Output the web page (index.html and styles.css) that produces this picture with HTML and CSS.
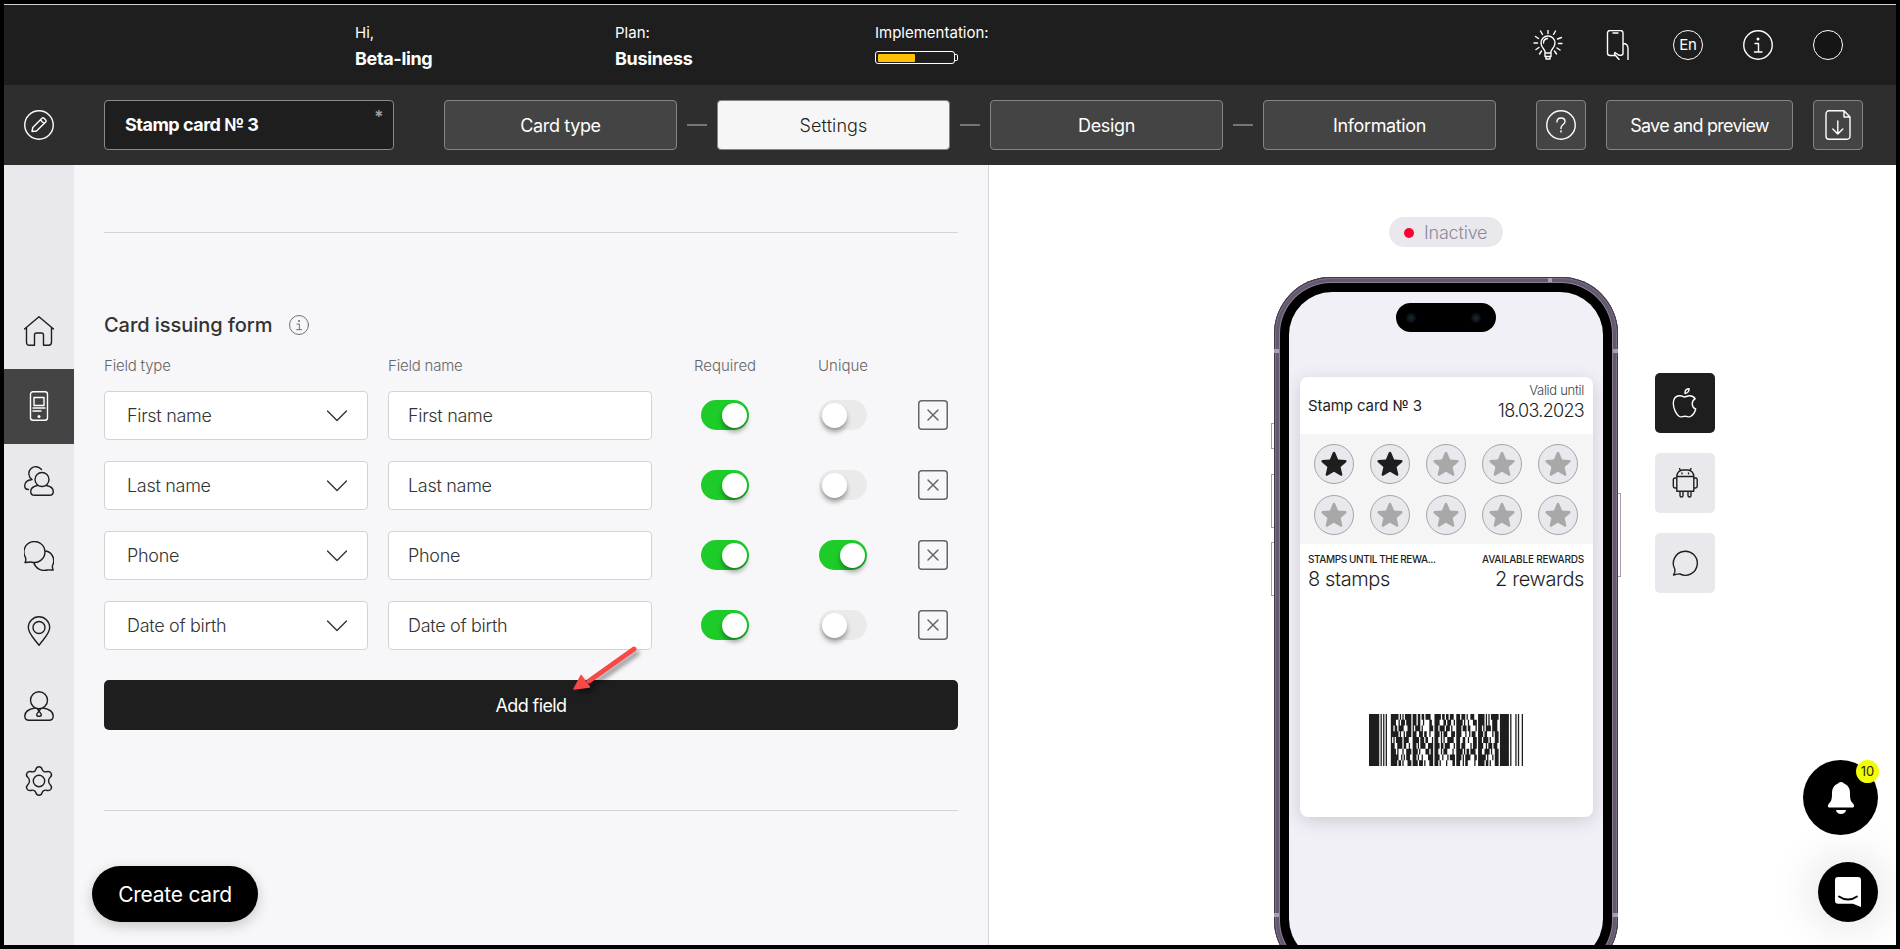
FILE: index.html
```
<!DOCTYPE html>
<html lang="en">
  <head>
    <meta charset="UTF-8" />
    <meta name="viewport" content="width=device-width, initial-scale=1.0" />
    <title>Stamp card - Settings</title>
    <link rel="stylesheet" href="styles.css">
  </head>
  <body>
    <!-- Shared icons -->
    <svg class="sprite" width="0" height="0">
      <symbol id="star" viewBox="0 0 26 26">
        <path d="M13 .8c.6 0 1 .4 1.300 1l2.800 6.700 7.200.6c1.300.1 1.700 1.300.8 2.200l-5.500 4.700 1.700 7.200c.2 1.300-.8 2-1.900 1.400L13 20.800l-6.400 3.800c-1.100.6-2.100-.1-1.900-1.400L6.400 16 .9 11.300C0 10.400.4 9.200 1.700 9.100l7.200-.6 2.800-6.700c.3-.6.7-1 1.300-1z" />
      </symbol>
      <symbol id="chevron" viewBox="0 0 20 12">
        <path d="M.5 1 10 10.500 19.500 1" />
      </symbol>
      <symbol id="cross" viewBox="0 0 30 30">
        <rect x=".75" y=".75" width="28.500" height="28.500" rx="3" />
        <path d="m10 10 10 10M20 10 10 20" />
      </symbol>
      <symbol id="info" viewBox="0 0 30 30">
        <circle cx="15" cy="15" r="14.250" />
        <path d="M12 13.500h3.500V22M11.500 22h7.500" />
        <circle class="dot" cx="15" cy="9" r="1.500" />
      </symbol>
    </svg>

    <div class="app">
      <!-- Top bar -->
      <header class="topbar">
        <div class="account">
          <div class="account-item">
            <div class="account-label">Hi,</div>
            <div class="account-value">Beta-ling</div>
          </div>
          <div class="account-item">
            <div class="account-label">Plan:</div>
            <div class="account-value">Business</div>
          </div>
          <div class="account-item">
            <div class="account-label">Implementation:</div>
            <div class="battery"><div class="battery-body"><div class="battery-level"></div></div><div class="battery-tip"></div></div>
          </div>
        </div>
        <div class="top-icons">
          <svg width="30" height="30" viewBox="0 0 30 30">
            <path d="M12 23v-1.500c0-2-4-4-4-8.500a6.800 6.800 0 0 1 14 0c0 4.500-4 6.500-4 8.500V23zM12 23v3.500h6V23M13 27v2h4v-2M10.500 13a4.500 4.500 0 0 1 4-4.500M15 3.500V0M9.500 4.500 7.500 1M5.500 8.500l-3-2M4.500 13H1M6 17.500l-3 2M8.500 21l-2 3M20.500 4.500l2-3.500M24.500 9l4-1.500M25.500 13.500H29M24 18l3 2M21.500 21l2 3" />
          </svg>
          <svg width="30" height="30" viewBox="0 0 30 30">
            <path d="M12 25.500H7A2.500 2.500 0 0 1 4.500 23V3A2.500 2.500 0 0 1 7 .5h10.500A2.500 2.500 0 0 1 20 3v21c-1 1.500-3 1.500-4.500 1l-3.500-2.500c-1 1 0 2.500 1 3.500l3 3.500M10 3h5M20 13.500c3 0 5 2 5 5V30" />
          </svg>
          <div class="lang">En</div>
          <svg width="30" height="30"><use href="#info" /></svg>
          <div class="avatar"></div>
        </div>
      </header>

      <!-- Card editor toolbar -->
      <nav class="toolbar">
        <div class="edit">
          <svg width="30" height="30" viewBox="0 0 30 30">
            <circle cx="15" cy="15" r="14.250" />
            <path d="m8 21.500.8-4L18 8.300c.6-.6 1.400-.6 2 0l1.700 1.700c.6.600.6 1.400 0 2L12.500 21zM16.500 10l3.500 3.500" />
          </svg>
        </div>
        <div class="card-name">Stamp card № 3<span class="asterisk">*</span></div>
        <div class="steps">
          <div class="step">Card type</div>
          <div class="dash"></div>
          <div class="step active">Settings</div>
          <div class="dash"></div>
          <div class="step">Design</div>
          <div class="dash"></div>
          <div class="step">Information</div>
        </div>
        <div class="actions">
          <div class="btn square">
            <svg width="30" height="30" viewBox="0 0 30 30">
              <circle cx="15" cy="15" r="14.250" />
              <path d="M11 12c0-2.500 1.500-4 4-4s4 1.500 4 3.500c0 3-4 3-4 6.500v.5M15 20.700v1.300" />
            </svg>
          </div>
          <div class="btn save">Save and preview</div>
          <div class="btn square">
            <svg width="26" height="30" viewBox="0 0 26 30">
              <path d="M19 .75H4A3 3 0 0 0 1 3.750v22.500a3 3 0 0 0 3 3h18a3 3 0 0 0 3-3V7zM19 .75V7h6M12.800 11v13M7.800 19l5 5 5-5" />
            </svg>
          </div>
        </div>
      </nav>

      <div class="main">
        <!-- Sidebar -->
        <aside class="sidebar">
          <div class="side-item">
            <svg width="30" height="30" viewBox="0 0 30 30">
              <path d="M.5 13 15 .8 29.500 13M2.500 11.500V26c0 2 1 3.300 3 3.300h5V19c0-1.500.8-2 2-2h5c1.200 0 2 .5 2 2v10.300h5c2 0 3-1.300 3-3.300V11.500" />
            </svg>
          </div>
          <div class="side-item active">
            <svg width="30" height="30" viewBox="0 0 30 30">
              <rect x="6.500" y=".75" width="17" height="28.500" rx="2.500" />
              <path d="M10 6.500h10v8H10zM9 17h12M9 20h8" />
              <circle class="dot" cx="15" cy="25.500" r="1.500" />
            </svg>
          </div>
          <div class="side-item">
            <svg width="30" height="30" viewBox="0 0 30 30">
              <circle cx="18" cy="13.500" r="7" />
              <path d="M13.500 19.500C9 20.300 6.700 22.500 6.700 25.500c0 2.500 1.500 3.800 4 3.800h14.600c2.500 0 4-1.300 4-3.800 0-3-2.500-5.200-7-6M17.500 3.500A7 7 0 1 0 8 13.500c-4 .5-7.300 2.500-7.300 6.500 0 2.200 1.300 3.500 3.800 3.500" />
            </svg>
          </div>
          <div class="side-item">
            <svg width="30" height="30" viewBox="0 0 30 30">
              <path d="M1 21.500c1-1.500 1-3 .5-5A10.500 10.500 0 1 1 8 21.200c-2-.5-4.500.3-7 .3zM22 10a10 10 0 0 1 6.500 14.500c-.3 1.500 0 3 .7 4.500-2 0-4-.3-6 0a11 11 0 0 1-13.500-7.500" />
            </svg>
          </div>
          <div class="side-item">
            <svg width="30" height="30" viewBox="0 0 30 30">
              <path d="M15 29.300C10 22.500 4.300 17.500 4.300 11.500a10.700 10.700 0 0 1 21.400 0c0 6-5.700 11-10.700 17.800z" />
              <circle cx="15" cy="11.500" r="6" />
            </svg>
          </div>
          <div class="side-item">
            <svg width="30" height="30" viewBox="0 0 30 30">
              <circle cx="15" cy="9.300" r="8.500" />
              <path d="M11 17C5 18 .8 20.500.8 25c0 2.800 1.500 4.300 4.200 4.300h20c2.700 0 4.200-1.500 4.200-4.300 0-4.500-4.200-7-10.200-8M13.500 18l1.500 2 1.500-2M15 20c-1.200 2-2.300 2.700-2.300 3.700 0 1 1 1.600 2.300 1.600s2.300-.6 2.300-1.600c0-1-1.100-1.700-2.300-3.700z" />
            </svg>
          </div>
          <div class="side-item">
            <svg width="30" height="30" viewBox="0 0 30 30">
              <path d="M11.800 3.500c.6-2 1.500-2.800 3.200-2.800s2.600.8 3.200 2.800c.5 1.700 2.300 2.700 4 2.200 2.300-.6 3.800-.4 4.800 1.300.9 1.500.9 2.700-.8 4.300-2.200 2-2.200 5.400 0 7.400 1.700 1.600 1.700 2.800.8 4.300-1 1.700-2.500 1.900-4.800 1.300-1.700-.5-3.500.5-4 2.200-.6 2-1.500 2.800-3.200 2.800s-2.600-.8-3.200-2.800c-.5-1.700-2.300-2.700-4-2.200-2.300.6-3.800.4-4.800-1.300-.9-1.500-.9-2.700.8-4.300 2.200-2 2.200-5.400 0-7.400-1.700-1.600-1.700-2.800-.8-4.300 1-1.700 2.500-1.900 4.800-1.300 1.700.5 3.500-.5 4-2.200z" />
              <circle cx="15" cy="15" r="5.700" />
            </svg>
          </div>
        </aside>

        <!-- Settings form -->
        <section class="content">
          <hr class="rule">
          <div class="form-title">Card issuing form <svg width="20" height="20"><use href="#info" /></svg></div>
          <div class="form-row form-head">
            <div>Field type</div>
            <div>Field name</div>
            <div class="center">Required</div>
            <div class="center">Unique</div>
          </div>
          <div class="form-row">
            <div class="field">First name <svg width="20" height="12"><use href="#chevron" /></svg></div>
            <div class="field name">First name</div>
            <div class="toggle on"></div>
            <div class="toggle"></div>
            <svg class="remove" width="30" height="30"><use href="#cross" /></svg>
          </div>
          <div class="form-row">
            <div class="field">Last name <svg width="20" height="12"><use href="#chevron" /></svg></div>
            <div class="field name">Last name</div>
            <div class="toggle on"></div>
            <div class="toggle"></div>
            <svg class="remove" width="30" height="30"><use href="#cross" /></svg>
          </div>
          <div class="form-row">
            <div class="field">Phone <svg width="20" height="12"><use href="#chevron" /></svg></div>
            <div class="field name">Phone</div>
            <div class="toggle on"></div>
            <div class="toggle on"></div>
            <svg class="remove" width="30" height="30"><use href="#cross" /></svg>
          </div>
          <div class="form-row">
            <div class="field">Date of birth <svg width="20" height="12"><use href="#chevron" /></svg></div>
            <div class="field name">Date of birth</div>
            <div class="toggle on"></div>
            <div class="toggle"></div>
            <svg class="remove" width="30" height="30"><use href="#cross" /></svg>
          </div>
          <div class="add-field">Add field</div>
          <hr class="rule">
        </section>

        <!-- Card preview -->
        <section class="preview">
          <div class="status"><span class="status-dot"></span>Inactive</div>
          <div class="phone">
            <i class="key key-1"></i><i class="key key-2"></i><i class="key key-3"></i><i class="key key-4"></i>
            <i class="band band-1"></i><i class="band band-2"></i><i class="band band-3"></i>
            <div class="screen">
              <div class="island"><span class="lens"></span><span class="lens"></span></div>
              <div class="card">
                <div class="card-head">
                  <div class="card-title">Stamp card № 3</div>
                  <div class="valid">
                    <div class="valid-label">Valid until</div>
                    <div class="valid-date">18.03.2023</div>
                  </div>
                </div>
                <div class="stamps">
                  <div class="stamp filled"><svg width="26" height="26"><use href="#star" /></svg></div>
                  <div class="stamp filled"><svg width="26" height="26"><use href="#star" /></svg></div>
                  <div class="stamp"><svg width="26" height="26"><use href="#star" /></svg></div>
                  <div class="stamp"><svg width="26" height="26"><use href="#star" /></svg></div>
                  <div class="stamp"><svg width="26" height="26"><use href="#star" /></svg></div>
                  <div class="stamp"><svg width="26" height="26"><use href="#star" /></svg></div>
                  <div class="stamp"><svg width="26" height="26"><use href="#star" /></svg></div>
                  <div class="stamp"><svg width="26" height="26"><use href="#star" /></svg></div>
                  <div class="stamp"><svg width="26" height="26"><use href="#star" /></svg></div>
                  <div class="stamp"><svg width="26" height="26"><use href="#star" /></svg></div>
                </div>
                <div class="totals">
                  <div>
                    <div class="total-label long">STAMPS UNTIL THE REWA...</div>
                    <div class="total-value">8 stamps</div>
                  </div>
                  <div class="right">
                    <div class="total-label">AVAILABLE REWARDS</div>
                    <div class="total-value">2 rewards</div>
                  </div>
                </div>
                <svg class="barcode" width="154" height="52" viewBox="0 0 120 9" preserveAspectRatio="none"><path id="barcode" /></svg>
              </div>
            </div>
          </div>
          <div class="platforms">
            <div class="platform active">
              <svg width="30" height="30" viewBox="0 0 30 30">
                <path d="M14.500 9c-2-.8-3.500-1.500-5.500-1.200C5.500 8.300 3.300 11 3.300 15.500c0 5 3 11 6 13 1.500 1 3.200-.2 5.700-.2s4 1.200 5.500.2c2.500-1.500 4.500-4.500 5.200-7.500-4-1.500-5-7.500-.5-10.300-1.500-2-3.500-2.900-5.700-2.900-1.800 0-3.200.8-5 1.200zM15 5.500C14.700 3 16.500 1 19 .6c.3 2.500-1.500 4.700-4 4.900z" />
              </svg>
            </div>
            <div class="platform">
              <svg width="30" height="30" viewBox="0 0 30 30">
                <path d="M6.800 8.500h17v14.700h-17zM6.800 8.500c0-4 3-6.500 6-6.500h5c3 0 6 2.500 6 6.500M10.500 2.500 9.500.5M20 2.500l1-2M6.800 10H5c-1 0-1.700.7-1.700 1.700v6.600c0 1 .7 1.700 1.700 1.700h1.800M23.800 10h1.700c1 0 1.700.7 1.700 1.700v6.600c0 1-.7 1.700-1.700 1.700h-1.700M10 23.500v4c0 2 3 2 3 0v-4M18 23.500v4c0 2 3 2 3 0v-4M12 5v.8M18.500 5v.8" />
              </svg>
            </div>
            <div class="platform">
              <svg width="30" height="30" viewBox="0 0 30 30">
                <path d="M3.500 27c1.500-2 1.800-4 1.300-6A12 12 0 1 1 10 26c-2-.5-4 .7-6.500 1z" />
              </svg>
            </div>
          </div>
        </section>
      </div>

      <!-- Floating elements -->
      <svg class="arrow" width="80" height="56" viewBox="0 0 80 56">
        <path class="arrow-line" d="M65 8 20 40" />
        <path class="arrow-tip" d="M5 48 12 34.500 20.500 46z" />
      </svg>
      <div class="create-card">Create card</div>
      <div class="bell">
        <svg width="28" height="34" viewBox="0 0 28 34">
          <path d="M14 1c1.500 0 2.500 1 3 1.500 4 1.500 6 5 6 9.500 0 6 .5 8 3 10.500 1.500 1.700 1.500 4-.5 4h-23c-2 0-2-2.300-.5-4C4.500 20 5 18 5 12c0-4.500 2-8 6-9.500.5-.5 1.500-1.500 3-1.500zM9 29h10a5 4 0 0 1-10 0z" />
        </svg>
        <span class="badge">10</span>
      </div>
      <div class="chat">
        <svg width="28" height="32" viewBox="0 0 28 32">
          <path class="bubble" d="M4 1h20a3 3 0 0 1 3 3v27l-8-3.300H4a3 3 0 0 1-3-3V4a3 3 0 0 1 3-3z" />
          <path class="smile" d="M5 20.500c5.500 4 12.500 4 18 0" />
        </svg>
      </div>
    </div>

    <script>
      // bar / space widths, one group of digits for each codeword
      const start = "81111113";
      const stop = "711311121";
      const rows = [
        "61111151 31212143 51212132 31311233 51111161",
        "42113141 31221422 43213211 51121331 51111242",
        "21214331 11411531 31413113 41312411 31114142",
        "61121141 32312213 41113331 43121132 41241131",
        "11115143 51312311 32111252 32221331 31411331",
        "32412212 31114241 41214311 31341131 42113132",
        "41131241 41143121 32113412 51112142 32411231",
        "62111132 31121441 42131141 41114321 61131131",
        "51211331 41311331 31141421 32112512 51211331",
      ];

      let d = "";
      rows.forEach((row, y) => {
        let x = 0;
        for (const part of [start, ...row.split(" "), stop]) {
          part.split("").forEach((w, i) => {
            if (i % 2 === 0) d += `M${x} ${y}h${w}v1h-${w}z`;
            x += Number(w);
          });
        }
      });
      document.getElementById("barcode").setAttribute("d", d);
    </script>
  </body>
</html>
```
FILE: styles.css
```
* {
  box-sizing: border-box;
}

body {
  margin: 0;
  font-family: Inter, "Open Sans", sans-serif;
  color: #1e1e1e;
  background-color: #000;
}

svg {
  fill: none;
  stroke: currentColor;
  stroke-width: 1.4;
  stroke-linecap: round;
  stroke-linejoin: round;
  flex: none;
}

.sprite {
  position: absolute;
}

.dot {
  fill: currentColor;
  stroke: none;
}

.app {
  position: relative;
  display: flex;
  flex-direction: column;
  height: 949px;
  border: 4px solid #000;
  background-color: #fff;
  overflow: hidden;
}

/* Top bar */
.topbar {
  display: flex;
  justify-content: space-between;
  height: 81px;
  padding-left: 351px;
  padding-right: 53px;
  border-top: 1px solid #d0d0d0;
  background-color: #1e1e1e;
  color: #fff;
}

.account {
  display: flex;
  padding-top: 18px;
}

.account-item {
  width: 260px;
}

.account-label {
  font-size: 15px;
  line-height: 20px;
}

.account-value {
  margin-top: 4px;
  font-size: 18px;
  font-weight: 700;
  line-height: 24px;
  letter-spacing: -0.35px;
}

.battery {
  display: flex;
  align-items: center;
  margin-top: 8px;
}

.battery-body {
  width: 80px;
  height: 13px;
  padding: 2px;
  border: 1px solid #fff;
  border-radius: 3px;
}

.battery-level {
  width: 37px;
  height: 8px;
  border-radius: 1px;
  background-color: #ffc107;
}

.battery-tip {
  width: 3px;
  height: 7px;
  border: 1px solid #fff;
  border-left: 0;
  border-radius: 0 2px 2px 0;
}

.top-icons {
  display: flex;
  align-items: center;
  gap: 40px;
}

.lang,
.avatar {
  width: 30px;
  height: 30px;
  border: 1px solid #fff;
  border-radius: 50%;
}

.lang {
  font-size: 15px;
  line-height: 28px;
  text-align: center;
  letter-spacing: -0.2px;
}

.avatar {
  background-color: #151515;
}

/* Toolbar */
.toolbar {
  display: flex;
  align-items: center;
  height: 80px;
  padding-right: 33px;
  background-color: #2e2e2e;
  color: #fff;
}

.edit {
  display: flex;
  justify-content: center;
  width: 70px;
}

.card-name {
  position: relative;
  width: 290px;
  height: 50px;
  margin-left: 30px;
  padding-left: 20px;
  border: 1px solid #8a8a8a;
  border-radius: 4px;
  background-color: #1e1e1e;
  font-size: 18px;
  font-weight: 700;
  line-height: 48px;
  letter-spacing: -0.5px;
}

.asterisk {
  position: absolute;
  top: 8px;
  right: 10px;
  color: #a0a0a0;
  font-size: 17px;
  font-weight: 600;
  line-height: 16px;
}

.steps {
  display: flex;
  align-items: center;
  gap: 10px;
  width: 1052px;
  margin-left: 50px;
}

.step,
.btn {
  height: 50px;
  border: 1px solid #858585;
  border-radius: 4px;
  background-color: #444;
  font-size: 18px;
  line-height: 50px;
  text-align: center;
  letter-spacing: -0.35px;
}

.step {
  flex: 1;
}

.step.active {
  background-color: #f6f6f6;
  color: #1e1e1e;
  font-weight: 300;
  letter-spacing: 0.1px;
}

.dash {
  width: 20px;
  height: 2px;
  background-color: #757575;
}

.actions {
  display: flex;
  gap: 20px;
  margin-left: 40px;
}

.btn {
  display: flex;
  align-items: center;
  justify-content: center;
}

.btn.square {
  width: 50px;
}

.btn.save {
  width: 187px;
  padding-top: 1px;
  letter-spacing: -0.75px;
}

/* Main area */
.main {
  display: flex;
  flex: 1;
}

.sidebar {
  width: 70px;
  padding-top: 129px;
  background-color: #e9e8ed;
}

.side-item {
  display: flex;
  align-items: center;
  justify-content: center;
  height: 75px;
  padding-bottom: 1px;
}

.side-item.active {
  background-color: #444;
  color: #fff;
}

.content {
  width: 915px;
  padding: 67px 30px 0;
  border-right: 1px solid #d6d6da;
  background-color: #f7f7f9;
}

.rule {
  height: 1px;
  margin: 0;
  border: 0;
  background-color: #d3d3d6;
}

.form-title {
  display: flex;
  align-items: center;
  gap: 16px;
  height: 30px;
  margin-top: 77px;
  color: #333;
  font-size: 20px;
  font-weight: 450;
  line-height: 26px;
  letter-spacing: -0.05px;
}

.form-title svg {
  color: #666;
}

.form-row {
  display: grid;
  grid-template-columns: 264px 264px 106px 90px 50px;
  column-gap: 20px;
  align-items: center;
  height: 49px;
  margin-bottom: 21px;
}

.form-head {
  height: 20px;
  margin: 15px 0 16px;
  color: #666;
  font-size: 15px;
  font-weight: 300;
  letter-spacing: -0.2px;
}

.center {
  text-align: center;
  letter-spacing: 0;
}

.field {
  display: flex;
  align-items: center;
  justify-content: space-between;
  height: 49px;
  padding: 0 20px 0 22px;
  border: 1px solid #d3d3d6;
  border-radius: 4px;
  background-color: #fff;
  color: #333;
  font-size: 18px;
  font-weight: 300;
  letter-spacing: -0.3px;
}

.field.name {
  padding-left: 19px;
}

.toggle {
  justify-self: center;
  width: 48px;
  height: 30px;
  margin-bottom: 1px;
  padding: 3px;
  border-radius: 15px;
  background-color: #eaeaea;
}

.toggle::after {
  content: "";
  display: block;
  width: 25px;
  height: 25px;
  border-radius: 50%;
  background-color: #fff;
  box-shadow: 0 4px 5px rgba(0, 0, 0, 0.35);
}

.toggle.on {
  background-color: #1dcc29;
}

.toggle.on::after {
  margin-left: 18px;
}

.remove {
  justify-self: center;
  margin-bottom: 1px;
  color: #666;
  stroke-width: 1.5;
}

.add-field {
  height: 50px;
  margin: 30px 0 80px;
  border-radius: 5px;
  background-color: #1e1e1e;
  color: #fff;
  font-size: 18px;
  line-height: 51px;
  text-align: center;
  letter-spacing: -0.6px;
}

/* Preview */
.preview {
  position: relative;
  flex: 1;
  padding-top: 52px;
}

.status {
  display: flex;
  align-items: center;
  gap: 10px;
  width: 114px;
  height: 30px;
  margin-left: 400px;
  padding: 1px 0 0 15px;
  border-radius: 15px;
  background-color: #e9e8ed;
  color: #8c8b9b;
  font-size: 18px;
  font-weight: 300;
  letter-spacing: -0.2px;
}

.status-dot {
  width: 10px;
  height: 10px;
  border-radius: 50%;
  background-color: #ff0032;
}

.phone {
  position: relative;
  width: 344px;
  height: 700px;
  margin: 30px 0 -200px 285px;
  padding: 15px;
  border-radius: 57px;
  background-color: #000;
  box-shadow: inset 0 0 0 1px #3f3948, inset 0 0 0 2px #7b6f88, inset 0 0 0 5px #64596e, inset 0 0 0 6px #8a8094;
}

.screen {
  height: 100%;
  padding-top: 11px;
  border-radius: 43px;
  background-color: #f2f0f7;
}

.key {
  position: absolute;
  left: -3px;
  width: 3px;
  border: 1px solid #a39daa;
  border-right: 0;
}

.key-1 {
  top: 146px;
  height: 26px;
}

.key-2 {
  top: 197px;
  height: 54px;
}

.key-3 {
  top: 265px;
  height: 54px;
}

.key-4 {
  top: 216px;
  left: 344px;
  height: 84px;
  border-right: 1px solid #a39daa;
  border-left: 0;
}

.band {
  position: absolute;
  left: 0;
  width: 344px;
  height: 4px;
  border: solid #a99fb3;
  border-width: 0 5px;
}

.band-1 {
  top: 72px;
}

.band-2 {
  top: 636px;
}

.band-3 {
  top: 1px;
  left: 274px;
  width: 4px;
  border-width: 0 2px;
}

.island {
  display: flex;
  align-items: center;
  justify-content: space-between;
  width: 100px;
  height: 29px;
  margin: 0 auto;
  padding: 0 15px 0 10px;
  border-radius: 15px;
  background-color: #000;
}

.lens {
  width: 10px;
  height: 10px;
  border-radius: 50%;
  background: radial-gradient(#1c2b30, #0b0f14 60%, #050505);
}

.card {
  width: 293px;
  height: 440px;
  margin: 45px 0 0 11px;
  border-radius: 8px;
  background-color: #fff;
  box-shadow: 0 4px 18px rgba(40, 30, 60, 0.18);
}

.card-head {
  display: flex;
  align-items: center;
  justify-content: space-between;
  height: 57px;
  padding: 0 9px 0 8px;
}

.card-title {
  font-size: 15px;
  letter-spacing: -0.1px;
}

.valid {
  margin-top: -8px;
  text-align: right;
  font-weight: 300;
}

.valid-label {
  color: #444;
  font-size: 13px;
  line-height: 18px;
  letter-spacing: -0.3px;
}

.valid-date {
  font-size: 18px;
  line-height: 23px;
  letter-spacing: -0.7px;
}

.stamps {
  display: grid;
  grid-template-columns: repeat(5, 40px);
  gap: 11px 16px;
  align-content: start;
  justify-content: center;
  height: 110px;
  padding: 10px 2px 0 0;
  background-color: #f5f5f5;
}

.stamp {
  display: flex;
  align-items: center;
  justify-content: center;
  height: 40px;
  border: 1px solid #a5a5a8;
  border-radius: 50%;
  background-color: #e9e8ed;
}

.stamp svg {
  fill: #a8a8a8;
  stroke: none;
}

.stamp.filled svg {
  fill: #1e1e1e;
}

.totals {
  display: flex;
  justify-content: space-between;
  padding: 8px 9px 0 8px;
}

.right {
  text-align: right;
}

.total-label {
  font-size: 10px;
  font-weight: 500;
  line-height: 15px;
  letter-spacing: -0.2px;
}

.total-label.long {
  letter-spacing: -0.4px;
}

.total-value {
  font-size: 20px;
  font-weight: 300;
  line-height: 24px;
  letter-spacing: -0.4px;
}

.barcode {
  display: block;
  margin: 123px 0 0 69px;
  fill: #1e1e1e;
  stroke: none;
}

.platforms {
  position: absolute;
  top: 208px;
  left: 666px;
  display: flex;
  flex-direction: column;
  gap: 20px;
}

.platform {
  display: flex;
  align-items: center;
  justify-content: center;
  width: 60px;
  height: 60px;
  border-radius: 5px;
  background-color: #e9e8ed;
}

.platform.active {
  background-color: #1e1e1e;
  color: #fff;
}

/* Floating elements */
.arrow {
  position: absolute;
  top: 637px;
  left: 565px;
  filter: drop-shadow(3px 4px 2px rgba(0, 0, 0, 0.4));
}

.arrow-line {
  stroke: #f84848;
  stroke-width: 4.8;
}

.arrow-tip {
  fill: #f84848;
  stroke: #f84848;
}

.create-card {
  position: absolute;
  top: 862px;
  left: 88px;
  width: 166px;
  height: 56px;
  border-radius: 28px;
  background-color: #000;
  box-shadow: 0 4px 14px rgba(0, 0, 0, 0.2);
  color: #fff;
  font-size: 21px;
  line-height: 57px;
  text-align: center;
  letter-spacing: -0.25px;
}

.bell,
.chat {
  position: absolute;
  right: 18px;
  display: flex;
  align-items: center;
  justify-content: center;
  border-radius: 50%;
  background-color: #000;
}

.bell {
  top: 756px;
  width: 75px;
  height: 75px;
}

.bell svg {
  fill: #fff;
  stroke: none;
}

.badge {
  position: absolute;
  top: 0;
  right: -1px;
  width: 23px;
  height: 23px;
  border-radius: 50%;
  background-color: #f2ff00;
  color: #222;
  font-size: 13px;
  line-height: 23px;
  text-align: center;
}

.chat {
  top: 858px;
  width: 60px;
  height: 60px;
  box-shadow: 0 0 50px rgba(0, 0, 0, 0.16);
}

.bubble {
  fill: #fff;
  stroke: none;
}

.smile {
  stroke: #000;
  stroke-width: 1.8;
}
```
